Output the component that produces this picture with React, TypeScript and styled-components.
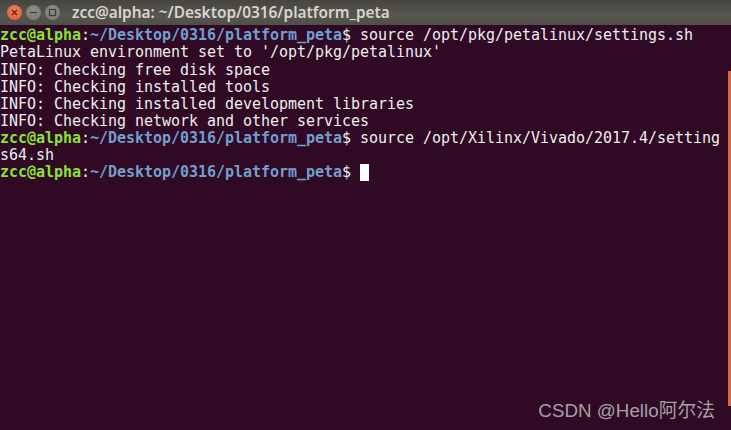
import styled, { createGlobalStyle } from "styled-components";

const GlobalStyle = createGlobalStyle`
  html, body {
    margin: 0;
    padding: 0;
    background: #300a24;
  }
`;

const promptPath = "~/Desktop/0316/platform_peta";

const Prompt = () => (
  <>
    <User>zcc@alpha</User>:<Path>{promptPath}</Path>$
  </>
);

const App = () => (
  <Terminal>
    <GlobalStyle />
    <TitleBar>
      <Controls>
        <WindowButton $kind="close">
          <svg width="9" height="9" viewBox="0 0 9 9">
            <path d="M2 2l5 5M7 2l-5 5" stroke="#5a2412" strokeWidth="1.3" />
          </svg>
        </WindowButton>
        <WindowButton $kind="other">
          <svg width="9" height="9" viewBox="0 0 9 9">
            <path d="M1 4.5h7" stroke="#3f3e39" strokeWidth="1.3" />
          </svg>
        </WindowButton>
        <WindowButton $kind="other">
          <svg width="9" height="9" viewBox="0 0 9 9">
            <rect x="1.5" y="1.5" width="6" height="6" fill="none" stroke="#3f3e39" strokeWidth="1.2" />
          </svg>
        </WindowButton>
      </Controls>
      <Title>zcc@alpha: ~/Desktop/0316/platform_peta</Title>
    </TitleBar>
    <Body>
      <Output>
        <Line>
          <Prompt /> source /opt/pkg/petalinux/settings.sh
        </Line>
        <Line>PetaLinux environment set to '/opt/pkg/petalinux'</Line>
        <Line>INFO: Checking free disk space</Line>
        <Line>INFO: Checking installed tools</Line>
        <Line>INFO: Checking installed development libraries</Line>
        <Line>INFO: Checking network and other services</Line>
        <Line>
          <Prompt /> source /opt/Xilinx/Vivado/2017.4/setting
        </Line>
        <Line>s64.sh</Line>
        <Line>
          <Prompt /> <Cursor />
        </Line>
      </Output>
      <ScrollTrack>
        <ScrollThumb />
      </ScrollTrack>
      <Watermark>CSDN @Hello阿尔法</Watermark>
    </Body>
  </Terminal>
);

const Terminal = styled.div`
  width: 731px;
  height: 430px;
  display: flex;
  flex-direction: column;
  overflow: hidden;
`;

const TitleBar = styled.div`
  height: 25px;
  display: flex;
  align-items: center;
  gap: 12px;
  padding: 0 0 1px 7px;
  box-sizing: border-box;
  background: linear-gradient(#45443f, #57564f 60%, #4f4e48);
`;

const Controls = styled.div`
  display: flex;
  gap: 4px;
`;

const WindowButton = styled.div<{ $kind: "close" | "other" }>`
  width: 15px;
  height: 15px;
  border-radius: 50%;
  display: flex;
  align-items: center;
  justify-content: center;
  background: ${(p) =>
    p.$kind === "close"
      ? "radial-gradient(circle at 50% 35%, #f0805a, #de5a30)"
      : "radial-gradient(circle at 50% 35%, #8f8e87, #75746d)"};
`;

const Title = styled.div`
  font-family: "Noto Sans", "DejaVu Sans", sans-serif;
  font-size: 15.4px;
  font-weight: 600;
  color: #d8d5cc;
  white-space: nowrap;
`;

const Body = styled.div`
  position: relative;
  flex: 1;
  display: flex;
  justify-content: space-between;
  background: #300a24;
`;

const Output = styled.div`
  padding-top: 2.4px;
  font-family: "DejaVu Sans Mono", monospace;
  font-size: 15px;
  letter-spacing: -0.03px;
  line-height: 17.07px;
  color: #eeeeec;
`;

const Line = styled.div`
  height: 17.07px;
  white-space: pre;
`;

const User = styled.span`
  color: #8ae234;
  font-weight: 700;
`;

const Path = styled.span`
  color: #729fcf;
  font-weight: 700;
`;

const Cursor = styled.span`
  display: inline-block;
  width: 9px;
  height: 17px;
  vertical-align: top;
  background: #ffffff;
`;

const ScrollTrack = styled.div`
  width: 3px;
`;

const ScrollThumb = styled.div`
  height: 335px;
  margin-top: 46px;
  background: #d9693a;
`;

const Watermark = styled.div`
  position: absolute;
  right: 16px;
  bottom: 8px;
  font-family: "Liberation Sans", "Noto Sans CJK SC", sans-serif;
  font-size: 18.8px;
  color: #a5a0a5;
  white-space: nowrap;
`;

export default App;
